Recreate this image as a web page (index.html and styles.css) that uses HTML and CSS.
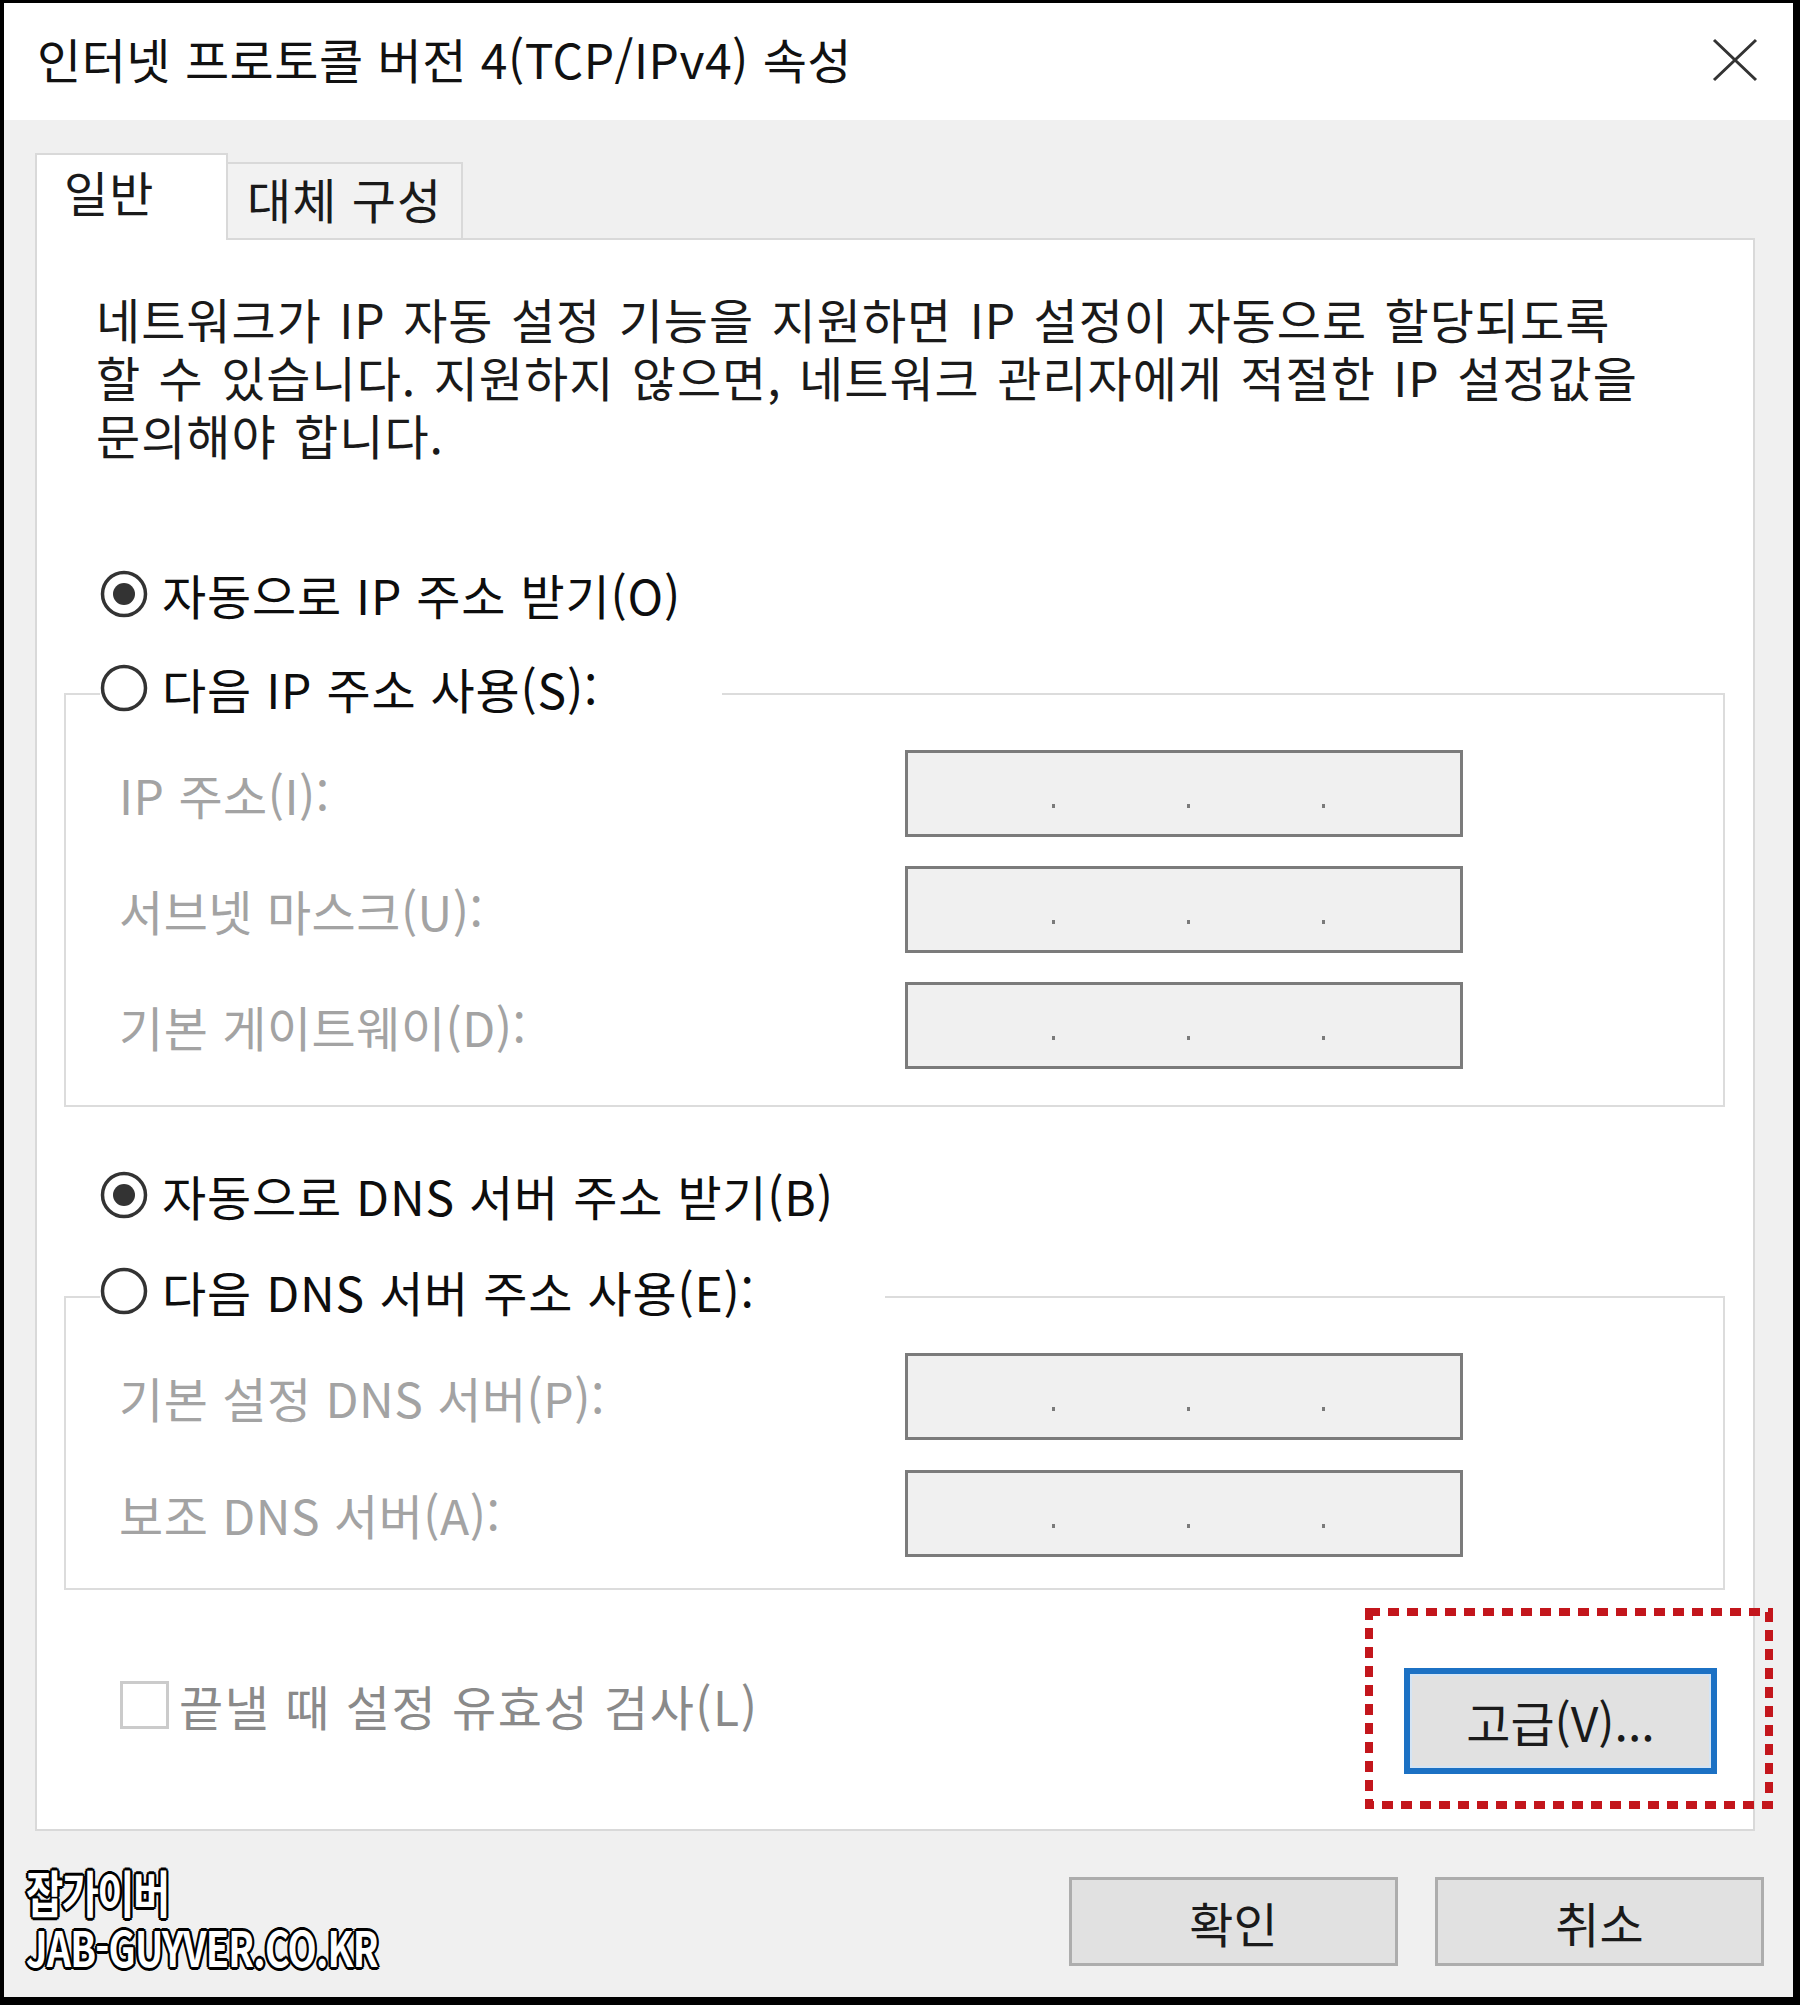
FILE: index.html
```html
<!DOCTYPE html>
<html lang="ko">
<head>
    <meta charset="UTF-8">
    <meta name="viewport" content="width=device-width, initial-scale=1.0">
    <title>인터넷 프로토콜 버전 4(TCP/IPv4) 속성</title>
    <link rel="stylesheet" href="styles.css">
</head>
<body>
    <div class="window">
        <div class="titlebar">
            <div class="title">인터넷 프로토콜 버전 4(TCP/IPv4) 속성</div>
            <svg class="close" width="46" height="44" viewBox="0 0 46 44">
                <path d="M2 2 L44 42 M44 2 L2 42" stroke="#333" stroke-width="3" fill="none"/>
            </svg>
        </div>

        <div class="body">
            <div class="tabs">
                <div class="tab active">일반</div>
                <div class="tab">대체 구성</div>
            </div>

            <div class="panel">
                <p class="desc">네트워크가 IP 자동 설정 기능을 지원하면 IP 설정이 자동으로 할당되도록<br>할 수 있습니다. 지원하지 않으면, 네트워크 관리자에게 적절한 IP 설정값을<br>문의해야 합니다.</p>

                <!-- IP address -->
                <div class="option option-top">
                    <svg class="radio" width="48" height="48" viewBox="0 0 48 48"><circle cx="24" cy="24" r="21.5" fill="#fff" stroke="#333" stroke-width="3.5"/><circle cx="24" cy="24" r="11" fill="#333"/></svg>
                    <span>자동으로 IP 주소 받기(O)</span>
                </div>
                <fieldset class="group">
                    <legend class="option legend-ip">
                        <svg class="radio" width="48" height="48" viewBox="0 0 48 48"><circle cx="24" cy="24" r="21.5" fill="#fff" stroke="#333" stroke-width="3.5"/></svg>
                        <span>다음 IP 주소 사용(S):</span>
                    </legend>
                    <div class="field">
                        <span class="field-label">IP 주소(I):</span>
                        <div class="ipbox"><i></i><i></i><i></i></div>
                    </div>
                    <div class="field">
                        <span class="field-label">서브넷 마스크(U):</span>
                        <div class="ipbox"><i></i><i></i><i></i></div>
                    </div>
                    <div class="field">
                        <span class="field-label">기본 게이트웨이(D):</span>
                        <div class="ipbox"><i></i><i></i><i></i></div>
                    </div>
                </fieldset>

                <!-- DNS -->
                <div class="option option-dns">
                    <svg class="radio" width="48" height="48" viewBox="0 0 48 48"><circle cx="24" cy="24" r="21.5" fill="#fff" stroke="#333" stroke-width="3.5"/><circle cx="24" cy="24" r="11" fill="#333"/></svg>
                    <span>자동으로 DNS 서버 주소 받기(B)</span>
                </div>
                <fieldset class="group group-dns">
                    <legend class="option legend-dns">
                        <svg class="radio" width="48" height="48" viewBox="0 0 48 48"><circle cx="24" cy="24" r="21.5" fill="#fff" stroke="#333" stroke-width="3.5"/></svg>
                        <span>다음 DNS 서버 주소 사용(E):</span>
                    </legend>
                    <div class="field">
                        <span class="field-label">기본 설정 DNS 서버(P):</span>
                        <div class="ipbox"><i></i><i></i><i></i></div>
                    </div>
                    <div class="field">
                        <span class="field-label">보조 DNS 서버(A):</span>
                        <div class="ipbox"><i></i><i></i><i></i></div>
                    </div>
                </fieldset>

                <div class="panel-foot">
                    <div class="check">
                        <span class="checkbox"></span>
                        <span>끝낼 때 설정 유효성 검사(L)</span>
                    </div>
                    <div class="adv-wrap">
                        <button class="btn adv" type="button">고급(V)...</button>
                        <svg class="mark" width="408" height="201" viewBox="0 0 408 201">
                            <rect x="4" y="4" width="400" height="193" fill="none" stroke="#c3161c" stroke-width="8" stroke-dasharray="11 8"/>
                        </svg>
                    </div>
                </div>
            </div>

            <div class="dialog-buttons">
                <button class="btn" type="button">확인</button>
                <button class="btn" type="button">취소</button>
            </div>

            <div class="watermark">
                <div class="wm-name">잡가이버</div>
                <div class="wm-url">JAB-GUYVER.CO.KR</div>
            </div>
        </div>
    </div>
</body>
</html>
```

FILE: styles.css
```css
body {
    margin: 0;
    background-color: #000000;
    font-family: "Noto Sans CJK KR", "Noto Sans", sans-serif;
    font-size: 48px;
    letter-spacing: 0.5px;
    color: #1a1a1a;
}
.window {
    margin: 3px 7px 8px 4px;
    height: 1994px;
    display: flex;
    flex-direction: column;
}
.titlebar {
    box-sizing: border-box;
    height: 117px;
    flex: none;
    background-color: #ffffff;
    display: flex;
    align-items: center;
    justify-content: space-between;
    padding: 0 35px 8px 33px;
}
.title {
    line-height: 1;
    color: #111111;
}
.close {
    display: block;
    margin-top: 4px;
}
.body {
    position: relative;
    flex: 1;
    background-color: #f0f0f0;
    padding: 33px 38px 0 31px;
}
.tabs {
    display: flex;
    align-items: flex-end;
    height: 85px;
}
.tab {
    box-sizing: border-box;
    height: 76px;
    width: 235px;
    padding: 0 0 6px 19px;
    display: flex;
    align-items: center;
    background-color: #f2f2f2;
    border: 2px solid #d9d9d9;
    border-left: none;
    border-bottom: none;
    line-height: 1;
    letter-spacing: 1px;
}
.tab.active {
    position: relative;
    z-index: 1;
    width: 193px;
    height: 87px;
    margin-bottom: -2px;
    padding: 0 0 14px 27px;
    background-color: #ffffff;
    border-left: 2px solid #d9d9d9;
}
.panel {
    box-sizing: border-box;
    height: 1593px;
    background-color: #ffffff;
    border: 2px solid #d9d9d9;
}
.desc {
    margin: 49px 0 0 59px;
    line-height: 58px;
    letter-spacing: 1px;
    word-spacing: 3px;
    white-space: nowrap;
    color: #1a1a1a;
}
.option {
    display: flex;
    align-items: center;
    height: 50px;
    line-height: 1;
    letter-spacing: 0.8px;
    color: #0d0d0d;
}
.option .radio {
    display: block;
    flex: none;
    margin-right: 14px;
}
.option-top {
    margin: 106px 0 0 63px;
}
.option-dns {
    margin: 63px 0 0 63px;
}
.group {
    box-sizing: border-box;
    width: 1661px;
    margin: 44px 0 0 27px;
    padding: 25px 0 36px 0;
    border: 2px solid #dcdcdc;
    min-width: 0;
}
.group-dns {
    margin-top: 46px;
    padding-bottom: 31px;
}
.group legend {
    box-sizing: border-box;
    height: 62px;
    margin-left: 34px;
    padding: 0 0 12px 0;
    background-color: #ffffff;
}
.legend-ip {
    width: 622px;
}
.legend-dns {
    width: 785px;
}
.field {
    display: grid;
    grid-template-columns: 839px 558px;
    align-items: center;
    height: 87px;
}
.field + .field {
    margin-top: 29px;
}
.group-dns .field + .field {
    margin-top: 30px;
}
.field-label {
    padding-left: 53px;
    line-height: 1;
    color: #a3a3a3;
}
.ipbox {
    box-sizing: border-box;
    height: 87px;
    border: 3px solid #7b7b7b;
    background-color: #f0f0f0;
    display: flex;
    justify-content: center;
    align-items: flex-end;
    gap: 132px;
    padding: 0 0 26px 8px;
}
.ipbox i {
    display: block;
    width: 3px;
    height: 4px;
    background-color: #7a7a7a;
}
.panel-foot {
    display: flex;
    justify-content: space-between;
    align-items: flex-start;
    margin-top: 78px;
    padding: 0 36px 0 83px;
}
.check {
    display: flex;
    align-items: center;
    gap: 10px;
    margin-top: 13px;
    line-height: 1;
    letter-spacing: 1.5px;
    color: #8a8a8a;
}
.checkbox {
    box-sizing: border-box;
    width: 49px;
    height: 48px;
    border: 3px solid #cbcbcb;
    background-color: #ffffff;
}
.adv-wrap {
    position: relative;
}
.mark {
    position: absolute;
    left: -39px;
    top: -60px;
}
.btn {
    box-sizing: border-box;
    width: 329px;
    height: 89px;
    padding: 0;
    border: 3px solid #adadad;
    background-color: #e1e1e1;
    font-family: inherit;
    font-size: 48px;
    line-height: 1;
    color: #1a1a1a;
}
.btn.adv {
    display: block;
    width: 313px;
    height: 106px;
    border: 6px solid #1c71c4;
    box-shadow: inset 0 0 0 2px #d4e4f4;
}
.dialog-buttons {
    display: flex;
    justify-content: flex-end;
    gap: 37px;
    margin: 46px -9px 0 0;
}
.watermark {
    position: absolute;
    left: 22px;
    top: 1745px;
    color: #ffffff;
    font-weight: 700;
    text-shadow: 3px 0 0 #000, -3px 0 0 #000, 0 3px 0 #000, 0 -3px 0 #000,
        2px 2px 0 #000, -2px 2px 0 #000, 2px -2px 0 #000, -2px -2px 0 #000;
}
.wm-name {
    font-size: 50px;
    line-height: 52px;
    letter-spacing: -2px;
    transform: scaleX(0.81);
    transform-origin: left top;
}
.wm-url {
    margin-top: 4px;
    font-size: 48px;
    line-height: 50px;
    letter-spacing: -1px;
    transform: scaleX(0.79);
    transform-origin: left top;
}
```
